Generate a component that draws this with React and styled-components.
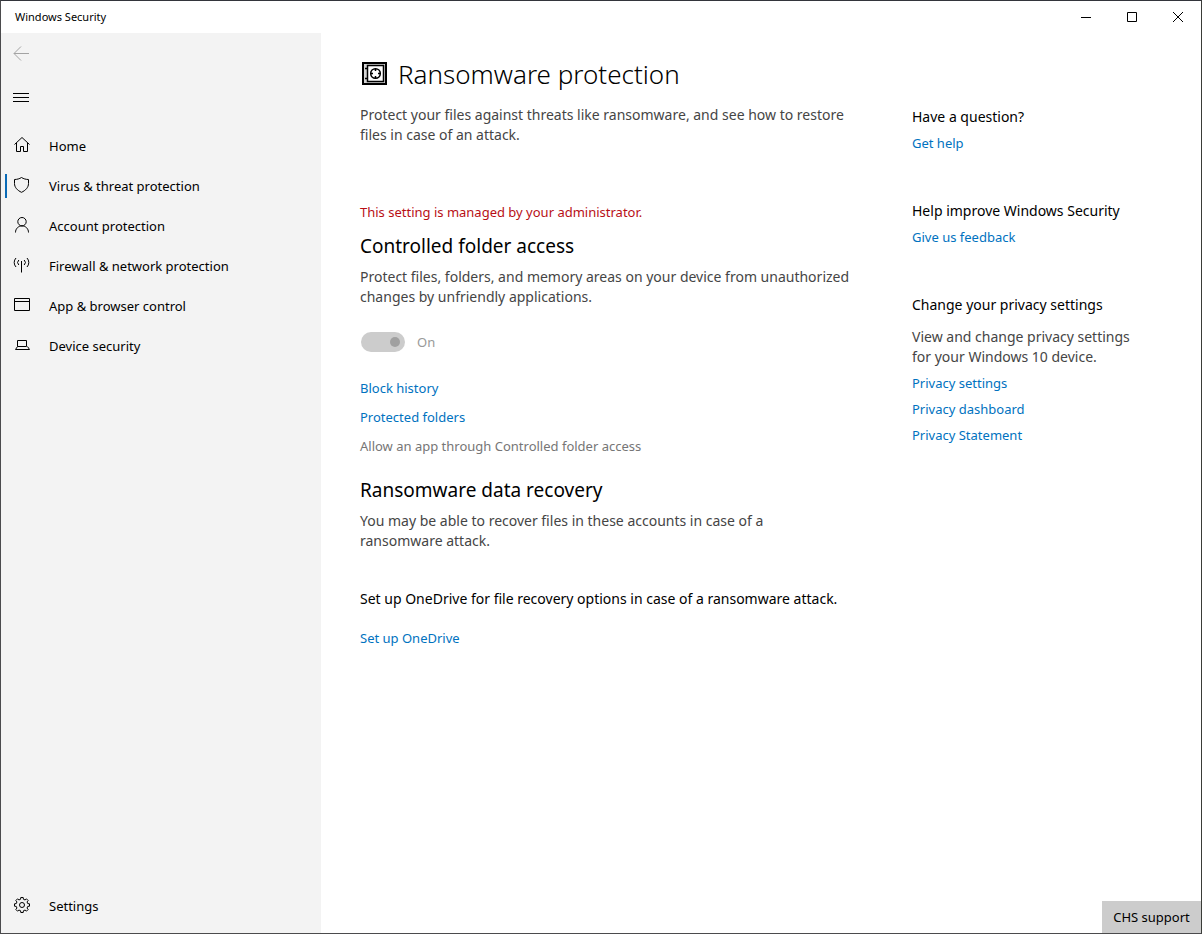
import styled, { createGlobalStyle } from "styled-components"

const GlobalStyle = createGlobalStyle`
	* {
		box-sizing: border-box;
	}
	body {
		margin: 0;
		background: #ffffff;
		color: #000000;
		font-family: "Noto Sans", "Open Sans", sans-serif;
		font-size: 13px;
		line-height: 20px;
	}
	h1, h2, h3, p, ul {
		margin: 0;
		padding: 0;
		font-weight: 400;
	}
	button {
		border: 0;
		padding: 0;
		background: transparent;
		color: inherit;
		font: inherit;
	}
`
const Window = styled.div`
	min-height: 100vh;
	display: flex;
	flex-direction: column;
	border: 1px solid #4b4b4d;
	border-top-color: #33353b;
	border-right-color: #3a3c38;
`
const TitleBar = styled.header`
	display: flex;
	justify-content: space-between;
	align-items: center;
	height: 32px;
	padding-left: 14px;
	font-size: 11px;
`
const WindowButtons = styled.div`
	display: flex;
`
const WindowButton = styled.button`
	display: flex;
	align-items: center;
	justify-content: center;
	width: 46px;
	height: 32px;
`
const Body = styled.div`
	flex: 1;
	display: flex;
`
const Sidebar = styled.nav`
	display: flex;
	flex-direction: column;
	flex: 0 0 320px;
	padding-bottom: 7px;
	background: #f3f3f3;
`
const IconButton = styled.button`
	display: flex;
	align-items: center;
	justify-content: center;
	width: 40px;
	height: 40px;
	margin-bottom: ${ ({$gap}) => $gap ? '4px' : '0' };
	color: ${ ({disabled}) => disabled ? '#a3a3a3' : '#000000' };
`
const NavList = styled.ul`
	list-style: none;
	margin-top: ${ ({$bottom}) => $bottom ? 'auto' : '9px' };
`
const NavLink = styled.a`
	display: flex;
	align-items: center;
	gap: 18px;
	height: 40px;
	padding-left: 4px;
	color: #000000;
	text-decoration: none;

	&::before {
		content: "";
		width: 2px;
		height: 24px;
		margin-right: -12px;
		background: ${ ({$active}) => $active ? '#0a6ab6' : 'transparent' };
	}
`
const Icon = styled.svg`
	flex: none;
	fill: none;
	stroke: currentColor;
	stroke-width: ${ ({$bold}) => $bold ? '2' : '1' };
`
const Page = styled.main`
	flex: 1;
	display: grid;
	grid-template-columns: minmax(0, 500px) minmax(0, 230px);
	column-gap: 52px;
	align-content: start;
	padding: 21px 39px 40px;
`
const Content = styled.div``
const Title = styled.h1`
	display: flex;
	align-items: center;
	gap: 10px;
	margin-bottom: 11px;
	font-size: 26px;
	line-height: 40px;

	&& {
		font-weight: 300;
	}
`
const Section = styled.section`
	margin-top: ${ ({$first}) => $first ? '57px' : '20px' };
`
const Heading = styled.h2`
	margin-bottom: 7px;
	font-size: 19px;
	line-height: 28px;
`
const Text = styled.p`
	max-width: ${ ({$narrow}) => $narrow ? '440px' : 'none' };
	color: ${ ({$dark}) => $dark ? '#000000' : '#454545' };
	font-size: 14px;
`
const Warning = styled.p`
	margin-bottom: 10px;
	color: #b80f16;
`
const ToggleRow = styled.div`
	display: flex;
	align-items: center;
	gap: 12px;
	margin: 25px 0 26px 1px;
	color: #999999;
`
const Toggle = styled.input`
	appearance: none;
	display: flex;
	align-items: center;
	justify-content: flex-end;
	width: 44px;
	height: 20px;
	margin: 0;
	padding-right: 5px;
	border-radius: 10px;
	background: #cccccc;

	&::before {
		content: "";
		width: 10px;
		height: 10px;
		border-radius: 50%;
		background: #a0a0a0;
	}
`
const Links = styled.div`
	display: flex;
	flex-direction: column;
	align-items: flex-start;
	gap: ${ ({$tight}) => $tight ? '6px' : '9px' };
`
const Link = styled.a`
	color: #0072c0;
	text-decoration: none;
`
const Unavailable = styled.span`
	color: #767676;
`
const Recovery = styled.div`
	display: flex;
	flex-direction: column;
	align-items: flex-start;
	gap: 19px;
	margin-top: 38px;
`
const Help = styled.aside`
	display: flex;
	flex-direction: column;
	gap: 48px;
	padding-top: 53px;
`
const HelpTitle = styled.h3`
	margin-bottom: ${ ({$wide}) => $wide ? '12px' : '6px' };
	font-size: 14px;
`
const HelpText = styled(Text)`
	margin-bottom: 6px;
`
const Support = styled.button`
	position: fixed;
	right: 1px;
	bottom: 1px;
	width: 99px;
	height: 32px;

	&& {
		background: #cccccc;
	}
`

// eight teeth, four points each
const gearPoints = Array.from({ length: 32 }).map((_, i) => {
	const tooth = Math.floor(i / 4) * 45
	const [offset, radius] = [[-14, 5.9], [-9, 7.6], [9, 7.6], [14, 5.9]][i % 4]
	const angle = (tooth + offset) * Math.PI / 180
	return `${9 + radius * Math.sin(angle)},${9 - radius * Math.cos(angle)}`
}).join(" ")

const icons = {
	home: <path d="M1.500 8.500 9 1.500l7.500 7M3.500 7v8.500h4v-5h3v5h4V7" />,
	shield: <path d="M8.500 1.500c2 1.300 4.500 2 7 2v4c0 4-3 7-7 8.800-4-1.800-7-4.800-7-8.800v-4c2.500 0 5-.7 7-2z" />,
	person: (
		<>
			<circle cx="9" cy="5.700" r="4.200" />
			<path d="M2.500 16.500c0-3.800 2.800-6.600 6.500-6.600s6.500 2.800 6.500 6.600" />
		</>
	),
	network: (
		<path d="M8.500 5v11.500M5.800 4a3.500 3.500 0 0 0 0 5M11.200 4a3.500 3.500 0 0 1 0 5M3 2a6.500 6.500 0 0 0 0 9M14 2a6.500 6.500 0 0 1 0 9" />
	),
	browser: <path d="M1.500 2.500h15v12h-15zM1.500 5.500h15" />,
	laptop: <path d="M4.500 4.500h9v6h-9zM4.500 10.500l-2 3h14l-2-3" />,
	gear: (
		<>
			<circle cx="9" cy="9" r="2.500" />
			<polygon strokeLinejoin="round" points={gearPoints} />
		</>
	),
}

const pages = [
	{ name: "Home", icon: "home" },
	{ name: "Virus & threat protection", icon: "shield", active: true },
	{ name: "Account protection", icon: "person" },
	{ name: "Firewall & network protection", icon: "network" },
	{ name: "App & browser control", icon: "browser" },
	{ name: "Device security", icon: "laptop" },
]

const privacyLinks = ["Privacy settings", "Privacy dashboard", "Privacy Statement"]

function NavItem ({ name, icon, active }) {
	return (
		<li>
			<NavLink href="#" $active={active} aria-current={active ? "page" : undefined}>
				<Icon width="18" height="20" viewBox="0 0 18 20" aria-hidden="true">{icons[icon]}</Icon>
				{name}
			</NavLink>
		</li>
	)
}

function SafeIcon () {
	return (
		<Icon $bold width="28" height="26" viewBox="0 0 28 26" aria-hidden="true">
			<path fill="#d4d4d4" d="M3 2h23v21H3z" />
			<path fill="#ffffff" strokeWidth="1.500" d="M7.500 4.500h16v16h-16z" />
			<path strokeWidth="1.500" d="M5 7.500h3M5 17.500h3" />
			<circle strokeWidth="1.500" cx="15.500" cy="12.500" r="4.800" />
			<path strokeWidth="1.500" d="M15.500 7.500v2.500M15.500 15v2.500M10.500 12.500H13M18 12.500h2.500" />
		</Icon>
	)
}

export default function App () {
	return (
		<>
			<GlobalStyle />
			<Window>
				<TitleBar>
					<span>Windows Security</span>
					<WindowButtons>
						<WindowButton aria-label="Minimize">
							<Icon width="12" height="12" viewBox="0 0 12 12"><path d="M1 6.500h10" /></Icon>
						</WindowButton>
						<WindowButton aria-label="Maximize">
							<Icon width="12" height="12" viewBox="0 0 12 12"><path d="M1.500 1.500h9v9h-9z" /></Icon>
						</WindowButton>
						<WindowButton aria-label="Close">
							<Icon width="12" height="12" viewBox="0 0 12 12"><path d="M1 1l10 10M11 1 1 11" /></Icon>
						</WindowButton>
					</WindowButtons>
				</TitleBar>
				<Body>
					<Sidebar>
						<IconButton $gap disabled aria-label="Back">
							<Icon width="16" height="16" viewBox="0 0 16 16"><path d="M16 8.500H1M8 1.500l-7 7 7 7" /></Icon>
						</IconButton>
						<IconButton aria-label="Menu">
							<Icon width="16" height="16" viewBox="0 0 16 16"><path d="M0 4.500h16M0 8.500h16M0 12.500h16" /></Icon>
						</IconButton>
						<NavList>
							{pages.map((page) => (
								<NavItem key={page.name} {...page} />
							))}
						</NavList>
						<NavList $bottom>
							<NavItem name="Settings" icon="gear" />
						</NavList>
					</Sidebar>
					<Page>
						<Content>
							<Title><SafeIcon />Ransomware protection</Title>
							<Text>
								Protect your files against threats like ransomware, and see how to restore files in case of an attack.
							</Text>
							<Section $first>
								<Warning>This setting is managed by your administrator.</Warning>
								<Heading>Controlled folder access</Heading>
								<Text>
									Protect files, folders, and memory areas on your device from unauthorized changes by unfriendly applications.
								</Text>
								<ToggleRow>
									<Toggle type="checkbox" role="switch" id="folder-access" defaultChecked disabled />
									<label htmlFor="folder-access">On</label>
								</ToggleRow>
								<Links>
									<Link href="#">Block history</Link>
									<Link href="#">Protected folders</Link>
									<Unavailable>Allow an app through Controlled folder access</Unavailable>
								</Links>
							</Section>
							<Section>
								<Heading>Ransomware data recovery</Heading>
								<Text $narrow>
									You may be able to recover files in these accounts in case of a ransomware attack.
								</Text>
								<Recovery>
									<Text $dark>Set up OneDrive for file recovery options in case of a ransomware attack.</Text>
									<Link href="#">Set up OneDrive</Link>
								</Recovery>
							</Section>
						</Content>
						<Help>
							<section>
								<HelpTitle>Have a question?</HelpTitle>
								<Links><Link href="#">Get help</Link></Links>
							</section>
							<section>
								<HelpTitle>Help improve Windows Security</HelpTitle>
								<Links><Link href="#">Give us feedback</Link></Links>
							</section>
							<section>
								<HelpTitle $wide>Change your privacy settings</HelpTitle>
								<HelpText>View and change privacy settings for your Windows 10 device.</HelpText>
								<Links $tight>
									{privacyLinks.map((name) => (
										<Link key={name} href="#">{name}</Link>
									))}
								</Links>
							</section>
						</Help>
					</Page>
				</Body>
				<Support>CHS support</Support>
			</Window>
		</>
	)
}
